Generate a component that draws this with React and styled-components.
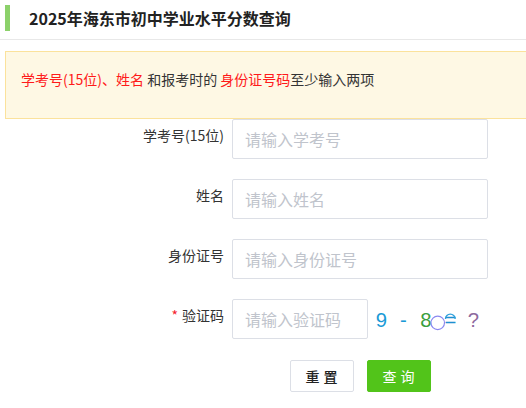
import React from "react";
import styled, { createGlobalStyle } from "styled-components";

const GlobalStyle = createGlobalStyle`
  html, body {
    margin: 0;
    padding: 0;
    background: #fff;
    overflow: hidden;
  }
  body {
    font-family: "Noto Sans CJK SC", "Liberation Sans", sans-serif;
    color: #333;
  }
  * { box-sizing: border-box; }
`;

const Page = styled.div`
  padding-top: 5px;
`;

const Header = styled.div`
  display: flex;
  align-items: center;
  gap: 19px;
  padding-left: 5px;
`;

const Bar = styled.span`
  width: 5px;
  height: 26px;
  background: #8cd16a;
`;

const Title = styled.h1`
  margin: 0;
  font-size: 16px;
  line-height: 26px;
  font-weight: 700;
  color: #222;
`;

const Divider = styled.div`
  height: 1px;
  background: #e8e8e8;
  margin: 8px 0 11px;
`;

const Notice = styled.div`
  margin-left: 5px;
  height: 68px;
  padding: 16px 15px 0;
  background: #fef8e4;
  border: 1px solid #fbe29c;
  border-right: none;
  font-size: 14px;
  line-height: 22px;
  color: #333;
`;

const Red = styled.span`
  color: #ff1a1a;
`;

const Form = styled.div`
  display: grid;
  grid-template-columns: 224px 256px;
  column-gap: 8px;
  row-gap: 20px;
`;

const Label = styled.label`
  text-align: right;
  font-size: 14px;
  line-height: 32px;
  color: #333;
`;

const Star = styled.span`
  color: #f5222d;
  margin-right: 4px;
`;

const Input = styled.input`
  width: ${(p) => (p.$short ? "136px" : "256px")};
  height: 40px;
  padding: 0 12px;
  border: 1px solid #dcdfe6;
  border-radius: 2px;
  font-family: inherit;
  font-size: 16px;
  color: #333;
  outline: none;
  &::placeholder {
    color: #c0c4cc;
  }
`;

const CaptchaRow = styled.div`
  display: flex;
  align-items: center;
  gap: 4px;
`;

const Buttons = styled.div`
  grid-column: 2;
  display: flex;
  justify-content: center;
  gap: 13px;
  padding-top: 1px;
`;

const Button = styled.button`
  width: 64px;
  height: 32px;
  border-radius: 2px;
  font-family: inherit;
  font-size: 14px;
  letter-spacing: 4px;
  padding: 0 0 0 4px;
  cursor: pointer;
  border: 1px solid ${(p) => (p.$primary ? "#52c41a" : "#dcdfe6")};
  background: ${(p) => (p.$primary ? "#52c41a" : "#fff")};
  color: ${(p) => (p.$primary ? "#fff" : "#222")};
  font-weight: ${(p) => (p.$primary ? 400 : 500)};
  box-shadow: ${(p) => (p.$primary ? "0 2px 0 rgba(0,0,0,0.04)" : "none")};
`;

const Captcha = () => (
  <svg width="120" height="36" viewBox="0 0 120 36">
    <g fontFamily="Liberation Sans, Arial, sans-serif" fontSize="21">
      <text x="4" y="26" fill="#1a9ad6">9</text>
      <text x="29" y="26" fill="#1a9ad6">-</text>
      <text x="50" y="26" fill="#3a9e40">8</text>
      <text x="75" y="26" fill="#1f8fd0">=</text>
      <text x="99" y="26" fill="#8e6a9e">?</text>
    </g>
    <circle cx="68" cy="22" r="7" fill="none" stroke="#8a87f0" strokeWidth="1.2" />
    <path d="M76 18 A5 5 0 0 1 86 18" fill="none" stroke="#2fa0dc" strokeWidth="1.4" />
  </svg>
);

export default function App() {
  return (
    <>
      <GlobalStyle />
      <Page>
        <Header>
          <Bar />
          <Title>2025年海东市初中学业水平分数查询</Title>
        </Header>
        <Divider />
        <Notice>
          <Red>学考号(15位)、姓名</Red> 和报考时的 <Red>身份证号码</Red>至少输入两项
        </Notice>
        <Form>
          <Label>学考号(15位)</Label>
          <Input placeholder="请输入学考号" />
          <Label>姓名</Label>
          <Input placeholder="请输入姓名" />
          <Label>身份证号</Label>
          <Input placeholder="请输入身份证号" />
          <Label>
            <Star>*</Star>验证码
          </Label>
          <CaptchaRow>
            <Input $short placeholder="请输入验证码" />
            <Captcha />
          </CaptchaRow>
          <Buttons>
            <Button>重置</Button>
            <Button $primary>查询</Button>
          </Buttons>
        </Form>
      </Page>
    </>
  );
}
